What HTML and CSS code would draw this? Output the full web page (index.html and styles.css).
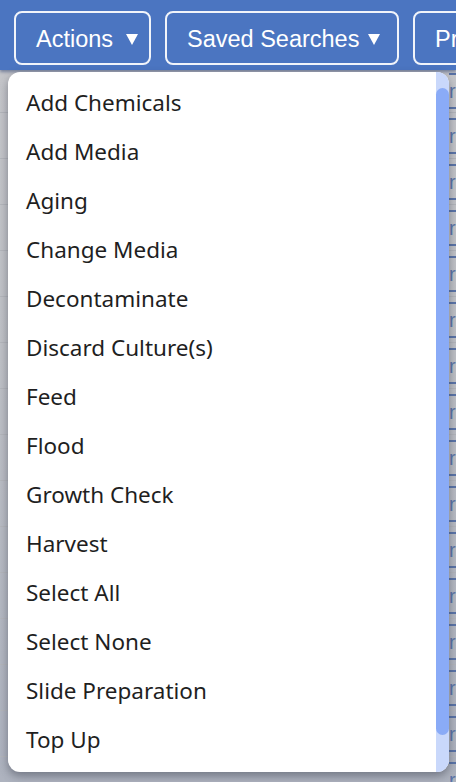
FILE: index.html
```html
<!DOCTYPE html>
<html>
<head>
<meta charset="utf-8">
<link rel="stylesheet" href="styles.css">
</head>
<body>
<div class="topbar">
  <div class="btn btn-actions"><span>Actions</span><svg class="tri" viewBox="0 0 12 12" width="12" height="12"><path d="M0 1 H12 L6 12 Z" fill="#fff"/></svg></div>
  <div class="btn btn-saved"><span>Saved Searches</span><svg class="tri" viewBox="0 0 12 12" width="12" height="12"><path d="M0 1 H12 L6 12 Z" fill="#fff"/></svg></div>
  <div class="btn btn-pr"><span>Pr</span></div>
</div>
<div class="backdrop">
  <div class="row"><span class="cell">r</span></div>
  <div class="row"><span class="cell">r</span></div>
  <div class="row"><span class="cell">r</span></div>
  <div class="row"><span class="cell">r</span></div>
  <div class="row"><span class="cell">r</span></div>
  <div class="row"><span class="cell">r</span></div>
  <div class="row"><span class="cell">r</span></div>
  <div class="row"><span class="cell">r</span></div>
  <div class="row"><span class="cell">r</span></div>
  <div class="row"><span class="cell">r</span></div>
  <div class="row"><span class="cell">r</span></div>
  <div class="row"><span class="cell">r</span></div>
  <div class="row"><span class="cell">r</span></div>
  <div class="row"><span class="cell">r</span></div>
  <div class="row"><span class="cell">r</span></div>
  <div class="row"><span class="cell">r</span></div>
</div>
<div class="menu">
  <ul class="items">
    <li>Add Chemicals</li>
    <li>Add Media</li>
    <li>Aging</li>
    <li>Change Media</li>
    <li>Decontaminate</li>
    <li>Discard Culture(s)</li>
    <li>Feed</li>
    <li>Flood</li>
    <li>Growth Check</li>
    <li>Harvest</li>
    <li>Select All</li>
    <li>Select None</li>
    <li>Slide Preparation</li>
    <li>Top Up</li>
  </ul>
  <div class="scroll"><div class="thumb"></div></div>
</div>
</body>
</html>
```
FILE: styles.css
```css
html, body {
  margin: 0;
  padding: 0;
  width: 456px;
  height: 782px;
  overflow: hidden;
  background: #b9bcc3;
  font-family: "Liberation Sans", Arial, sans-serif;
}
.topbar {
  height: 70px;
  background: #4b75c1;
  box-shadow: 0 2px 3px rgba(40, 60, 110, 0.5);
  display: flex;
  align-items: flex-start;
  gap: 14px;
  padding: 11px 0 0 14px;
  box-sizing: border-box;
  white-space: nowrap;
  position: relative;
  z-index: 1;
  overflow: hidden;
}
.btn {
  flex: none;
  height: 54px;
  box-sizing: border-box;
  border: 2px solid rgba(255, 255, 255, 0.92);
  border-radius: 8px;
  color: #fff;
  font-size: 23.5px;
  display: flex;
  align-items: center;
  padding: 3px 12px 0 20px;
}
.btn-actions { width: 137px; }
.btn-saved { width: 234px; }
.btn-pr { width: 80px; }
.tri {
  flex: none;
  margin-left: 13px;
  margin-top: -1px;
}
.btn-saved .tri { margin-left: 9px; }
.backdrop {
  display: flex;
  flex-direction: column;
  background: linear-gradient(to bottom, #c5c6ca 0%, #bfc1c6 40%, #aeb3bf 100%);
  height: 712px;
}
.row {
  height: 45px;
  flex: none;
  border-bottom: 1px solid #b4b6bb;
  display: flex;
  justify-content: flex-end;
  align-items: center;
}
.row:first-child { height: 42px; }
.cell {
  width: 7px;
  height: 36px;
  border-top: 2px solid #5a74a8;
  border-bottom: 2px solid #5a74a8;
  box-sizing: border-box;
  display: flex;
  align-items: center;
  color: #5a74a8;
  font-size: 20px;
  line-height: 1;
  overflow: hidden;
}
.menu {
  position: absolute;
  left: 8px;
  top: 72px;
  width: 441px;
  height: 700px;
  background: #fff;
  border-radius: 12px;
  box-shadow: 0 4px 10px rgba(40, 45, 60, 0.45);
  display: flex;
  overflow: hidden;
  z-index: 2;
}
.items {
  list-style: none;
  margin: 0;
  padding: 6px 0 0 18px;
  flex: 1;
}
.items li {
  height: 49px;
  line-height: 49px;
  font-family: "Noto Sans", "DejaVu Sans", sans-serif;
  font-size: 22.5px;
  color: #1f1f1f;
}
.scroll {
  width: 13px;
  flex: none;
  background: #c9d8fb;
  padding-top: 16px;
  box-sizing: border-box;
}
.thumb {
  height: 647px;
  background: #8aabf7;
  border-radius: 7px;
}
```
